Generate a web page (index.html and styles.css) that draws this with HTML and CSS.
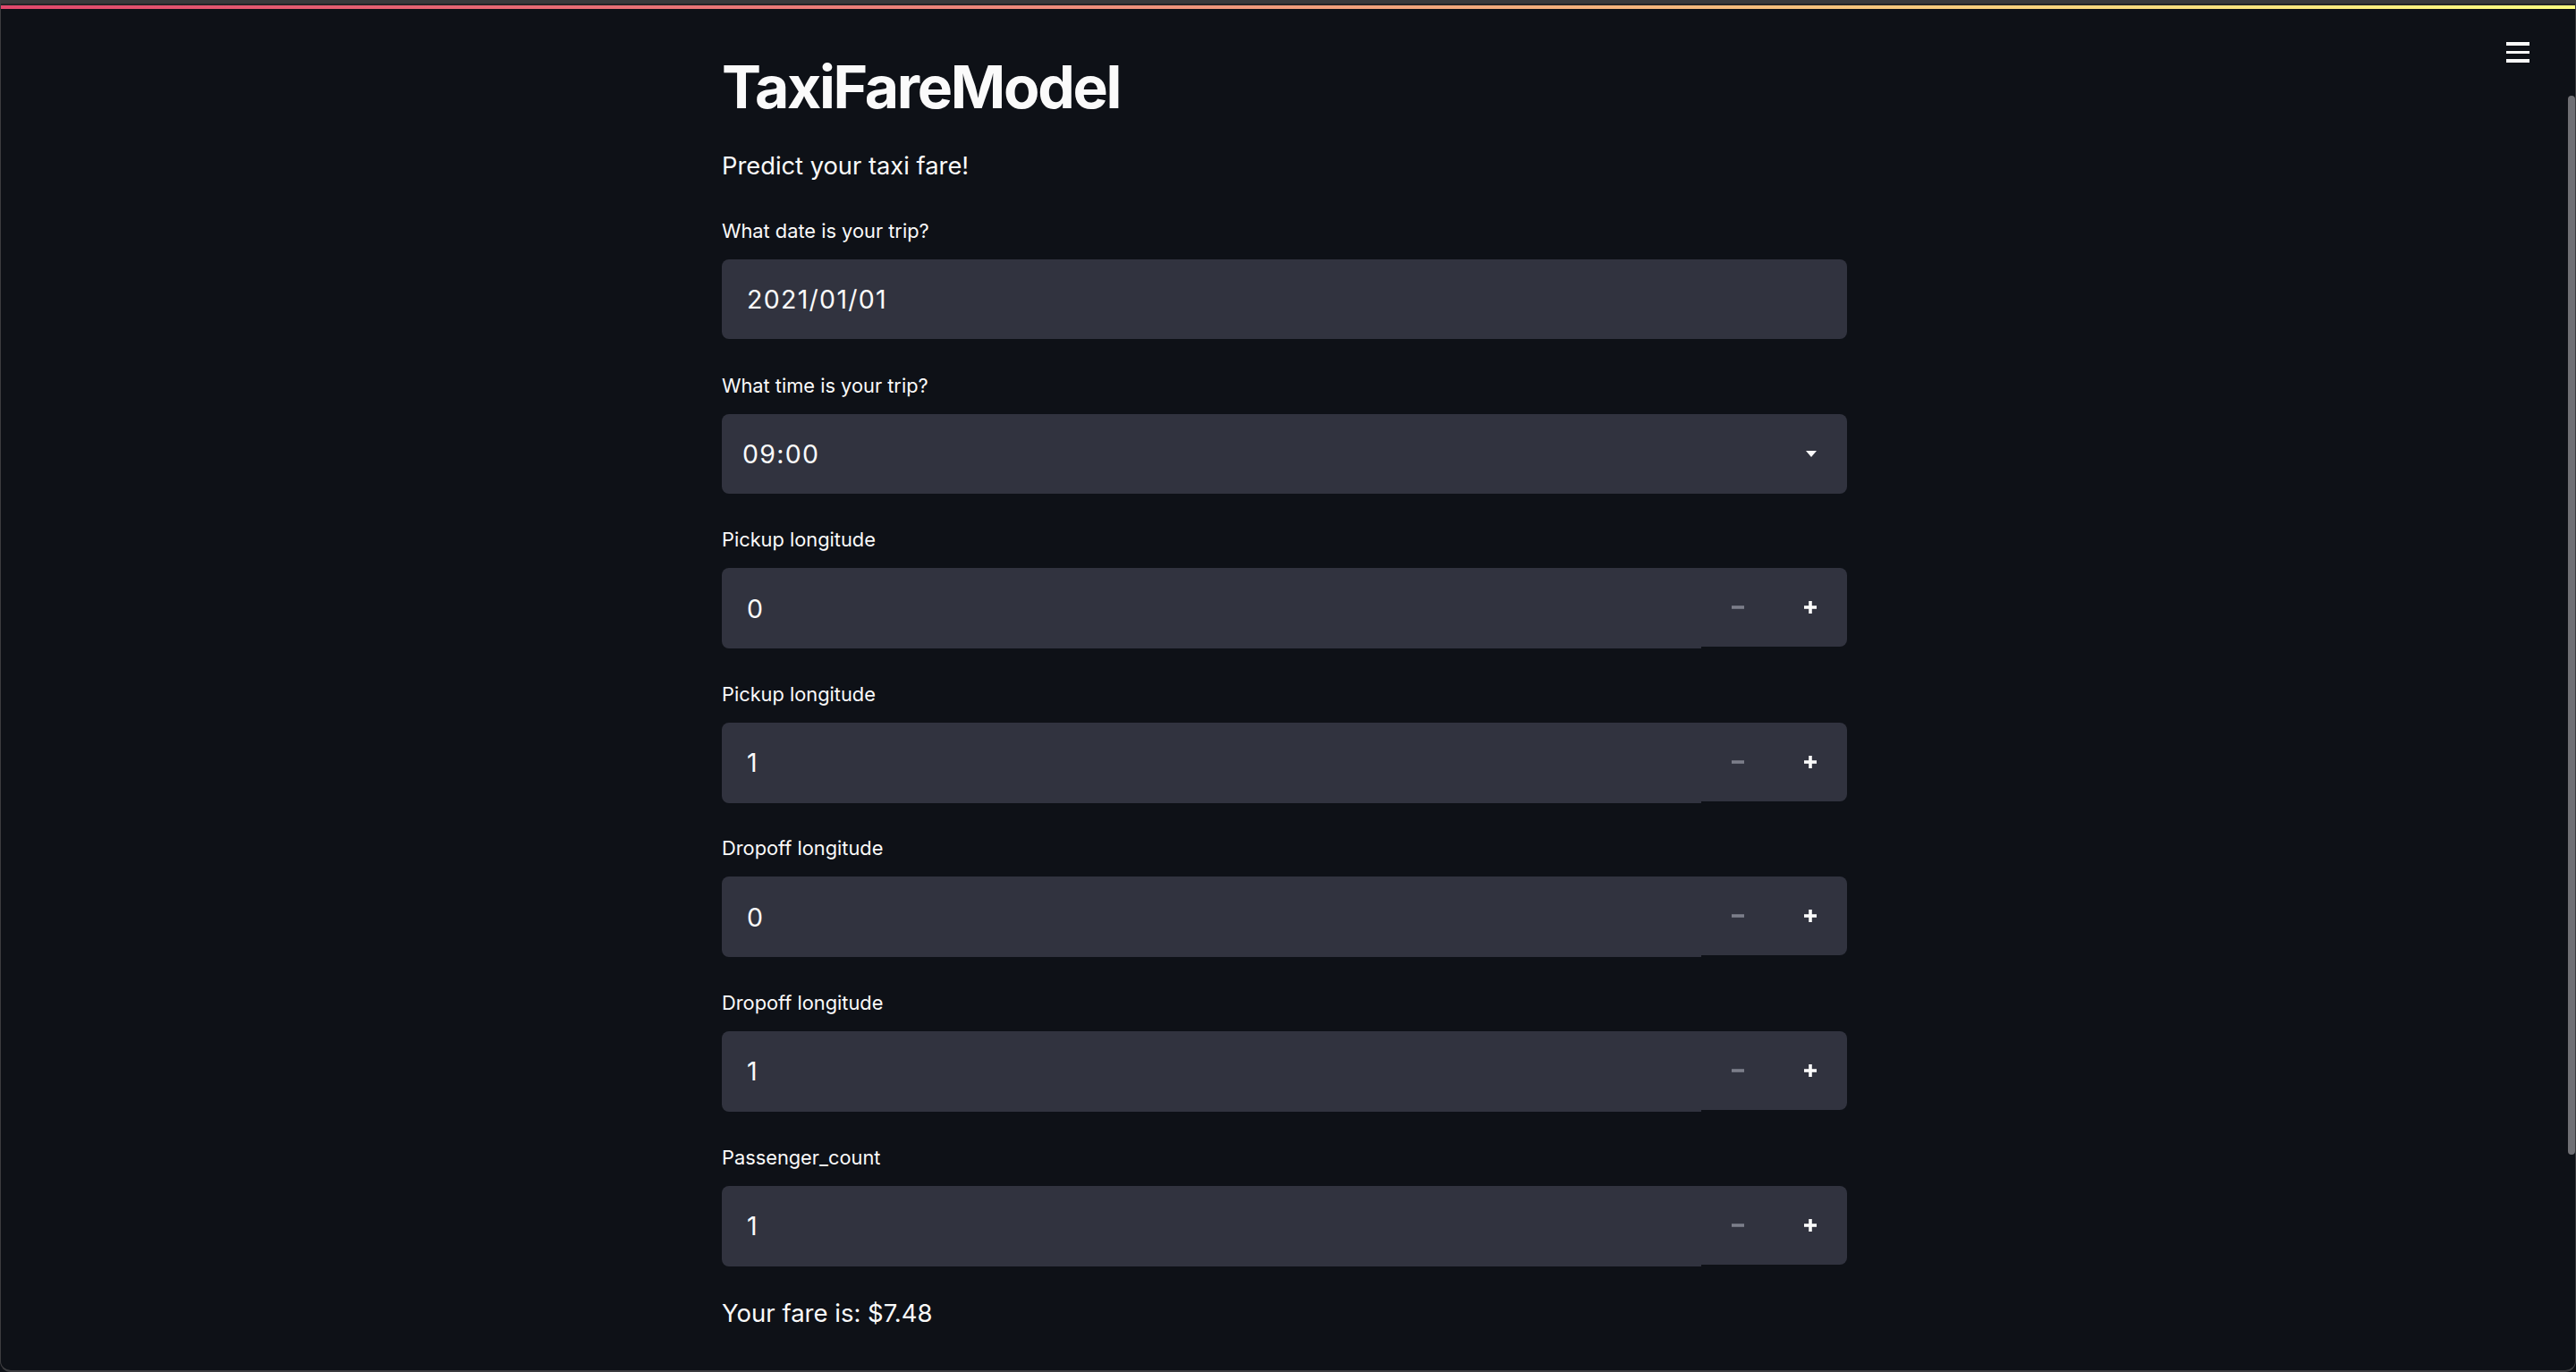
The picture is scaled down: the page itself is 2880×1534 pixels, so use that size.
FILE: index.html
```html
<!DOCTYPE html>
<html lang="en">
<head>
<meta charset="utf-8">
<title>TaxiFareModel</title>
<link rel="stylesheet" href="styles.css">
</head>
<body>
<div class="window">
  <div class="chrome"></div>
  <div class="chrome-line"></div>
  <div class="decoration"></div>
  <div class="app">
    <main class="main">
      <div class="column">
        <h1 class="title">TaxiFareModel</h1>
        <p class="subtitle">Predict your taxi fare!</p>

        <div class="field">
          <div class="label">What date is your trip?</div>
          <div class="box date"><span class="value">2021/01/01</span></div>
        </div>

        <div class="field">
          <div class="label">What time is your trip?</div>
          <div class="box select"><span class="value">09:00</span>
            <svg class="caret" width="12" height="7" viewBox="0 0 12 7"><path d="M0 0 L12 0 L6 7 Z" fill="#fafafa"/></svg>
          </div>
        </div>

        <div class="field">
          <div class="label">Pickup longitude</div>
          <div class="number">
            <div class="num-input"><span class="value">0</span></div>
            <div class="steppers">
              <div class="step"><svg width="14" height="14" viewBox="0 0 14 14"><rect x="0" y="5.2" width="14" height="3.6" fill="#7c7e8a"/></svg></div>
              <div class="step"><svg width="14" height="14" viewBox="0 0 14 14"><rect x="0" y="5.2" width="14" height="3.6" fill="#fafafa"/><rect x="5.2" y="0" width="3.6" height="14" fill="#fafafa"/></svg></div>
            </div>
          </div>
        </div>

        <div class="field">
          <div class="label">Pickup longitude</div>
          <div class="number">
            <div class="num-input"><span class="value">1</span></div>
            <div class="steppers">
              <div class="step"><svg width="14" height="14" viewBox="0 0 14 14"><rect x="0" y="5.2" width="14" height="3.6" fill="#7c7e8a"/></svg></div>
              <div class="step"><svg width="14" height="14" viewBox="0 0 14 14"><rect x="0" y="5.2" width="14" height="3.6" fill="#fafafa"/><rect x="5.2" y="0" width="3.6" height="14" fill="#fafafa"/></svg></div>
            </div>
          </div>
        </div>

        <div class="field">
          <div class="label">Dropoff longitude</div>
          <div class="number">
            <div class="num-input"><span class="value">0</span></div>
            <div class="steppers">
              <div class="step"><svg width="14" height="14" viewBox="0 0 14 14"><rect x="0" y="5.2" width="14" height="3.6" fill="#7c7e8a"/></svg></div>
              <div class="step"><svg width="14" height="14" viewBox="0 0 14 14"><rect x="0" y="5.2" width="14" height="3.6" fill="#fafafa"/><rect x="5.2" y="0" width="3.6" height="14" fill="#fafafa"/></svg></div>
            </div>
          </div>
        </div>

        <div class="field">
          <div class="label">Dropoff longitude</div>
          <div class="number">
            <div class="num-input"><span class="value">1</span></div>
            <div class="steppers">
              <div class="step"><svg width="14" height="14" viewBox="0 0 14 14"><rect x="0" y="5.2" width="14" height="3.6" fill="#7c7e8a"/></svg></div>
              <div class="step"><svg width="14" height="14" viewBox="0 0 14 14"><rect x="0" y="5.2" width="14" height="3.6" fill="#fafafa"/><rect x="5.2" y="0" width="3.6" height="14" fill="#fafafa"/></svg></div>
            </div>
          </div>
        </div>

        <div class="field">
          <div class="label">Passenger_count</div>
          <div class="number">
            <div class="num-input"><span class="value">1</span></div>
            <div class="steppers">
              <div class="step"><svg width="14" height="14" viewBox="0 0 14 14"><rect x="0" y="5.2" width="14" height="3.6" fill="#7c7e8a"/></svg></div>
              <div class="step"><svg width="14" height="14" viewBox="0 0 14 14"><rect x="0" y="5.2" width="14" height="3.6" fill="#fafafa"/><rect x="5.2" y="0" width="3.6" height="14" fill="#fafafa"/></svg></div>
            </div>
          </div>
        </div>

        <p class="fare">Your fare is: $7.48</p>
      </div>
    </main>
    <div class="scrolltrack"><div class="thumb"></div></div>
  </div>
  <div class="menu" aria-label="menu">
    <span class="bar"></span><span class="bar"></span><span class="bar"></span>
  </div>
</div>
</body>
</html>
```
FILE: styles.css
```css
* { box-sizing: border-box; }
html, body {
  margin: 0;
  padding: 0;
  background: #0e1117;
}
body {
  font-family: Inter, "Noto Sans", "Liberation Sans", sans-serif;
  color: #fafafa;
}
.window {
  position: relative;
  width: 2880px;
  height: 1534px;
  border-left: 1px solid #3c3c3f;
  border-right: 1px solid #3c3c3f;
  border-bottom: 2px solid #3c3c3f;
  border-radius: 0 0 12px 12px;
  overflow: hidden;
  background: #0e1117;
  display: flex;
  flex-direction: column;
}
.chrome { height: 4px; background: #3a3a3c; }
.chrome-line { height: 2px; background: #232326; }
.decoration {
  height: 4px;
  background: linear-gradient(90deg, #e1486c 0%, #ee8a7b 40%, #f6c07c 70%, #fefd80 100%);
}
.app {
  flex: 1;
  display: flex;
}
.main {
  flex: 1;
  display: flex;
  justify-content: center;
}
.column {
  width: 1258px;
  padding-top: 47px;
}
.scrolltrack {
  width: 8px;
}
.thumb {
  margin-top: 97px;
  height: 1184px;
  border-radius: 4px;
  background: #6f6f74;
}
.title {
  margin: 0;
  height: 80px;
  line-height: 80px;
  font-size: 66px;
  font-weight: 700;
  letter-spacing: -2.3px;
}
.subtitle {
  margin: 29px 0 0;
  height: 40px;
  line-height: 40px;
  font-size: 27.3px;
}
.field { margin-top: 36.6px; }
.subtitle + .field { margin-top: 37px; }
.label {
  height: 30px;
  line-height: 30px;
  font-size: 21.8px;
  margin-bottom: 17px;
}
.box {
  height: 89px;
  background: #31333f;
  border-radius: 8px;
  display: flex;
  align-items: center;
}
.box.date { padding-left: 28px; }
.box.select {
  padding-left: 23px;
  padding-right: 34px;
  justify-content: space-between;
}
.value {
  font-size: 28.5px;
  letter-spacing: 1.3px;
}
.number {
  height: 89px;
  display: flex;
  align-items: flex-start;
}
.num-input {
  flex: 1;
  height: 90px;
  background: #31333f;
  border-radius: 8px 0 0 8px;
  display: flex;
  align-items: center;
  padding-left: 28px;
}
.steppers {
  width: 163px;
  height: 88px;
  background: #31333f;
  border-radius: 0 8px 8px 0;
  display: flex;
}
.step {
  flex: 1;
  display: flex;
  align-items: center;
  justify-content: center;
}
.step svg { display: block; }
.caret { display: block; }
.fare {
  margin: 33.5px 0 0;
  height: 40px;
  line-height: 40px;
  font-size: 27.5px;
}
.menu {
  position: absolute;
  left: 2801px;
  top: 47px;
  width: 26px;
  display: flex;
  flex-direction: column;
  gap: 6px;
}
.bar {
  display: block;
  height: 3.7px;
  background: #fafafa;
}
```
